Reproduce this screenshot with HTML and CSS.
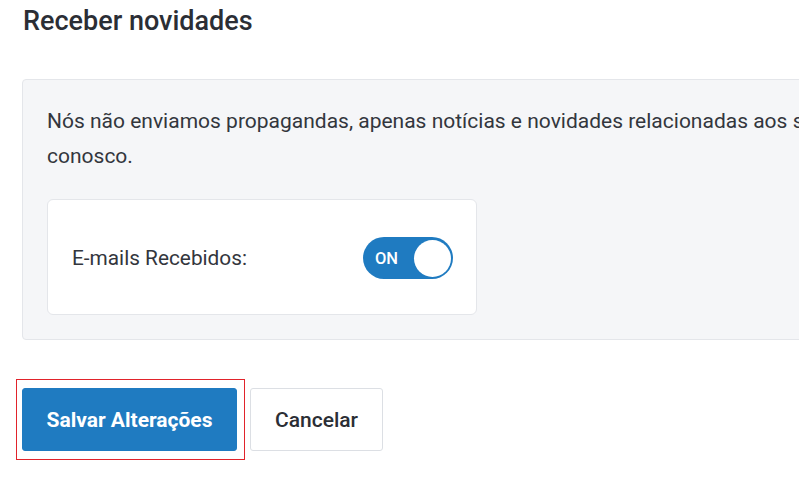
FILE: index.html
```html
<!DOCTYPE html>
<html lang="pt-BR">
<head>
<meta charset="utf-8">
<title>Receber novidades</title>
<link rel="stylesheet" href="styles.css">
</head>
<body>
<main class="page">
  <h2 class="title">Receber novidades</h2>
  <section class="panel">
    <p class="panel-text">Nós não enviamos propagandas, apenas notícias e novidades relacionadas aos serviços que você tem conosco.</p>
    <div class="card">
      <span class="card-label">E-mails Recebidos:</span>
      <button class="toggle" type="button" aria-pressed="true">
        <span class="toggle-text">ON</span>
        <span class="toggle-knob"></span>
      </button>
    </div>
  </section>
  <div class="actions">
    <span class="highlight">
      <button class="btn btn-primary" type="button">Salvar Alterações</button>
    </span>
    <button class="btn btn-default" type="button">Cancelar</button>
  </div>
</main>
</body>
</html>
```

FILE: styles.css
```css
html {
  overflow: hidden;
}

html, body {
  margin: 0;
  padding: 0;
  background: #ffffff;
}

body {
  font-family: Roboto, "Liberation Sans", Arial, sans-serif;
  color: #33363d;
}

.page {
  padding: 0 0 40px 22px;
  width: 1100px;
}

.title {
  margin: 0;
  padding: 5px 0 0 1px;
  font-size: 27px;
  font-weight: 500;
  line-height: 32px;
  color: #2b2e35;
}

.panel {
  box-sizing: border-box;
  width: 1035px;
  margin-top: 42px;
  padding: 24px 24px 24px;
  background: #f5f6f8;
  border: 1px solid #e4e6ea;
  border-radius: 4px;
}

.panel-text {
  margin: 0;
  font-size: 21px;
  line-height: 35px;
  color: #33363d;
}

.card {
  box-sizing: border-box;
  width: 430px;
  margin-top: 25px;
  padding: 37px 23px 35px 24px;
  display: flex;
  align-items: center;
  justify-content: space-between;
  background: #ffffff;
  border: 1px solid #e4e6ea;
  border-radius: 6px;
}

.card-label {
  font-size: 20.8px;
  line-height: 24px;
  color: #33363d;
}

.toggle {
  box-sizing: border-box;
  width: 90px;
  height: 42px;
  padding: 0 2px 0 12px;
  display: flex;
  align-items: center;
  justify-content: space-between;
  background: #1f7bc1;
  border: none;
  border-radius: 21px;
  cursor: pointer;
}

.toggle-text {
  font-family: Roboto, "Liberation Sans", Arial, sans-serif;
  font-size: 16.5px;
  font-weight: 500;
  color: #ffffff;
}

.toggle-knob {
  width: 37px;
  height: 37px;
  border-radius: 50%;
  background: #ffffff;
}

.actions {
  display: flex;
  align-items: flex-start;
  gap: 13px;
  margin-top: 48px;
}

.highlight {
  position: relative;
  display: block;
  height: 63px;
}

.highlight::after {
  content: "";
  position: absolute;
  top: -9px;
  right: -8px;
  bottom: -9px;
  left: -6px;
  border: 1px solid #e1232b;
  pointer-events: none;
}

.btn {
  box-sizing: border-box;
  display: block;
  height: 63px;
  margin: 0;
  padding: 0;
  font-family: Roboto, "Liberation Sans", Arial, sans-serif;
  font-size: 21px;
  font-weight: 500;
  border-radius: 3px;
  cursor: pointer;
}

.btn-primary {
  width: 215px;
  background: #1f7bc1;
  color: #ffffff;
  border: 1px solid #1f7bc1;
  font-weight: 700;
}

.btn-default {
  width: 133px;
  background: #ffffff;
  color: #2b2e35;
  border: 1px solid #dcdfe4;
}
```
